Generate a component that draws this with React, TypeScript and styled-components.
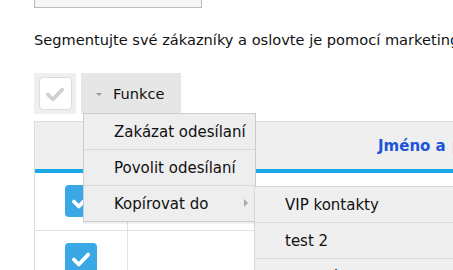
import React from "react"
import styled, { createGlobalStyle } from "styled-components"

const GlobalStyle = createGlobalStyle`
  body {
    margin: 0;
    font-family: "DejaVu Sans", Verdana, sans-serif;
    background: #fff;
    overflow: hidden;
  }
`

const Page = styled.div`
  width: 453px;
  height: 270px;
  padding-left: 34px;
  box-sizing: border-box;
  overflow: hidden;
`

const TopBox = styled.div`
  width: 166px;
  height: 7px;
  background: #f5f5f5;
  border: 1px solid #bbb;
  border-top: none;
`

const Intro = styled.p`
  margin: 22px 0 0;
  font-size: 14.6px;
  line-height: 20px;
  color: #111;
  white-space: nowrap;
`

const Toolbar = styled.div`
  display: flex;
  gap: 5px;
  margin-top: 23px;
  height: 41px;
`

const CheckButton = styled.div`
  width: 42px;
  height: 41px;
  background: #efefef;
  display: flex;
  align-items: center;
  justify-content: center;
`

const CheckInner = styled.div`
  width: 31px;
  height: 31px;
  background: #fff;
  border: 1px solid #ddd;
  border-radius: 4px;
  display: flex;
  align-items: center;
  justify-content: center;
`

const FunkceWrap = styled.div`
  position: relative;
`

const FunkceButton = styled.div`
  width: 100px;
  height: 41px;
  background: #e6e6e6;
  display: flex;
  align-items: center;
  padding-left: 15px;
  box-sizing: border-box;
  font-size: 14.6px;
  color: #111;
`

const Caret = styled.span`
  width: 0;
  height: 0;
  border-left: 3px solid transparent;
  border-right: 3px solid transparent;
  border-top: 3px solid #999;
  margin-right: 11px;
  margin-top: 2px;
`

const Menu = styled.ul`
  position: absolute;
  left: 2px;
  top: 40px;
  width: 171px;
  margin: 0;
  padding: 0;
  list-style: none;
  background: #eee;
  border: 1px solid #ccc;
  box-shadow: 0 2px 0 rgba(0, 0, 0, 0.06);
  z-index: 2;
`

const MenuItem = styled.li<{ $first?: boolean }>`
  position: relative;
  height: 35px;
  display: flex;
  align-items: center;
  padding-left: 30px;
  font-size: 15px;
  color: #111;
  border-top: ${(p) => (p.$first ? "none" : "1px solid #d9d9d9")};
  white-space: nowrap;
`

const Arrow = styled.span`
  position: absolute;
  right: 7px;
  top: 13px;
  border-top: 4px solid transparent;
  border-bottom: 4px solid transparent;
  border-left: 4px solid #aaa;
`

const SubMenu = styled.ul`
  position: absolute;
  left: 170px;
  top: 0;
  width: 240px;
  margin: 0;
  padding: 0;
  list-style: none;
  background: #efefef;
  border: 1px solid #d6d6d6;
`

const Table = styled.div`
  margin-top: 7px;
  width: 440px;
  border: 1px solid #ddd;
  border-bottom: none;
`

const HeaderRow = styled.div`
  display: grid;
  grid-template-columns: 94px 1fr;
  height: 47px;
  background: #efefef;
  border-bottom: 4px solid #19a9e6;
`

const HeaderCell = styled.div`
  display: flex;
  align-items: center;
  padding-left: 249px;
  font-size: 15px;
  font-weight: bold;
  color: #1d55d8;
  white-space: nowrap;
`

const Pink = styled.span`
  color: #e58fd2;
  margin-left: 6px;
`

const Row = styled.div`
  display: grid;
  grid-template-columns: 93px 1fr;
  height: 57px;
  border-bottom: 1px solid #e2e2e2;
`

const CheckCell = styled.div`
  display: flex;
  justify-content: center;
  padding-top: 12px;
  border-right: 1px solid #e2e2e2;
`

const BlueCheck = styled.div`
  width: 32px;
  height: 32px;
  background: #3aa8e4;
  border-radius: 4px;
  display: flex;
  align-items: center;
  justify-content: center;
`

const Check = ({ color, size }: { color: string; size: number }) => (
  <svg width={size} height={size} viewBox="0 0 20 20">
    <path d="M3.5 10.5 L8 15 L16.5 6" fill="none" stroke={color} strokeWidth="3.4" strokeLinecap="round" strokeLinejoin="round" />
  </svg>
)

const App = () => (
  <Page>
    <GlobalStyle />
    <TopBox />
    <Intro>Segmentujte své zákazníky a oslovte je pomocí marketingových kampaní</Intro>
    <Toolbar>
      <CheckButton>
        <CheckInner>
          <Check color="#d0d0d0" size={22} />
        </CheckInner>
      </CheckButton>
      <FunkceWrap>
        <FunkceButton>
          <Caret />
          Funkce
        </FunkceButton>
        <Menu>
          <MenuItem $first>Zakázat odesílaní</MenuItem>
          <MenuItem>Povolit odesílaní</MenuItem>
          <MenuItem>
            Kopírovat do
            <Arrow />
            <SubMenu>
              <MenuItem $first>VIP kontakty</MenuItem>
              <MenuItem>test 2</MenuItem>
              <MenuItem>ostatní</MenuItem>
            </SubMenu>
          </MenuItem>
        </Menu>
      </FunkceWrap>
    </Toolbar>
    <Table>
      <HeaderRow>
        <div />
        <HeaderCell>
          Jméno a<Pink>příjmení</Pink>
        </HeaderCell>
      </HeaderRow>
      <Row>
        <CheckCell>
          <BlueCheck>
            <Check color="#fff" size={22} />
          </BlueCheck>
        </CheckCell>
        <div />
      </Row>
      <Row>
        <CheckCell>
          <BlueCheck>
            <Check color="#fff" size={22} />
          </BlueCheck>
        </CheckCell>
        <div />
      </Row>
    </Table>
  </Page>
)

export default App
